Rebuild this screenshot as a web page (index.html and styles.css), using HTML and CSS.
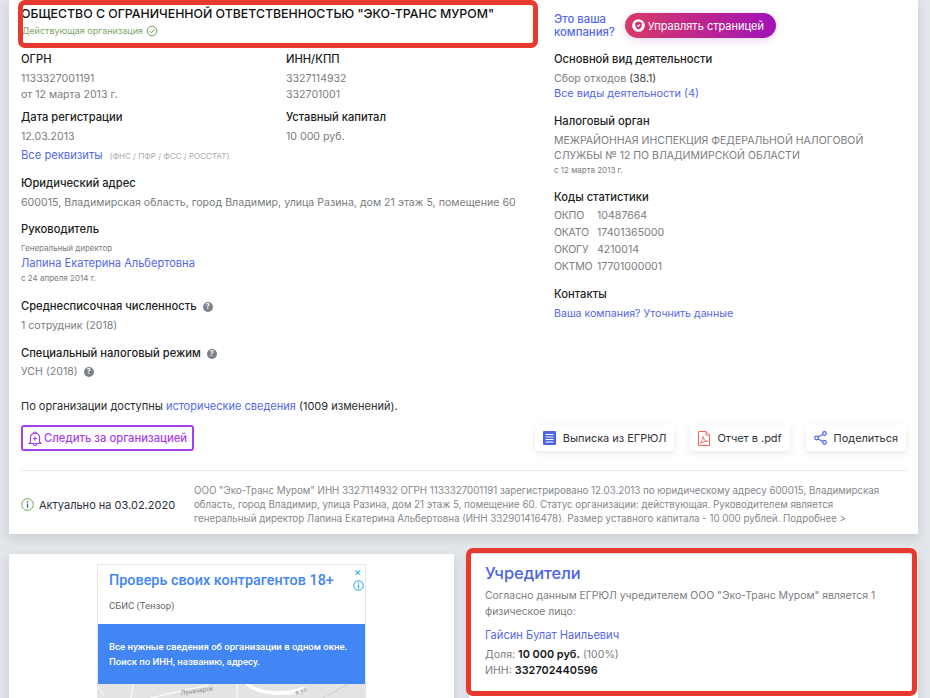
FILE: index.html
```html
<!DOCTYPE html>
<html lang="ru">
<head>
<meta charset="utf-8">
<title>ООО "Эко-Транс Муром"</title>
<link rel="stylesheet" href="styles.css">
</head>
<body>
<main class="page">
  <section class="card main-card">
    <div class="columns">
      <div class="left">
        <div class="head">
          <h1>ОБЩЕСТВО С ОГРАНИЧЕННОЙ ОТВЕТСТВЕННОСТЬЮ "ЭКО-ТРАНС МУРОМ"</h1>
          <div class="status">Действующая организация
            <svg width="12" height="12" viewBox="0 0 12 12" fill="none" stroke="#6aa84f"><circle cx="6" cy="6" r="4.8"/><path d="M3.8 6.1 5.4 7.7 8.3 4.6"/></svg>
          </div>
        </div>
        <div class="pair">
          <div class="cell"><h3>ОГРН</h3><p>1133327001191<br>от 12 марта 2013 г.</p></div>
          <div class="cell"><h3>ИНН/КПП</h3><p>3327114932<br>332701001</p></div>
        </div>
        <div class="pair second">
          <div class="cell"><h3>Дата регистрации</h3><p>12.03.2013</p></div>
          <div class="cell"><h3>Уставный капитал</h3><p>10 000 руб.</p></div>
        </div>
        <div class="req"><a href="#">Все реквизиты</a><span class="req-note">(ФНС / ПФР / ФСС / РОССТАТ)</span></div>
        <div class="block addr"><h3>Юридический адрес</h3><p>600015, Владимирская область, город Владимир, улица Разина, дом 21 этаж 5, помещение 60</p></div>
        <div class="block boss">
          <h3>Руководитель</h3>
          <div class="tiny">Генеральный директор</div>
          <a class="boss-name" href="#">Лапина Екатерина Альбертовна</a>
          <div class="tiny since">с 24 апреля 2014 г.</div>
        </div>
        <div class="block staff"><h3>Среднесписочная численность <span class="q">?</span></h3><p>1 сотрудник (2018)</p></div>
        <div class="block tax"><h3>Специальный налоговый режим <span class="q">?</span></h3><p>УСН (2018) <span class="q">?</span></p></div>
        <div class="history">По организации доступны <a href="#">исторические сведения</a> (1009 изменений).</div>
      </div>
      <div class="right">
        <div class="claim">
          <a class="claim-q" href="#">Это ваша<br>компания?</a>
          <a class="manage" href="#">
            <svg width="13" height="13" viewBox="0 0 14 14"><circle cx="7" cy="7" r="6.8" fill="#fff"/><path d="M7 2.800 10.500 4V7c0 2-1.500 3.300-3.500 4.200C5 10.300 3.500 9 3.500 7V4Z" fill="#cf2e72"/><path d="M5.400 6.800 6.700 8 8.700 5.800" fill="none" stroke="#fff" stroke-width="1.100"/></svg>
            Управлять страницей</a>
        </div>
        <div class="block activity"><h3>Основной вид деятельности</h3><p>Сбор отходов <span class="dark">(38.1)</span><br><a href="#">Все виды деятельности (4)</a></p></div>
        <div class="block organ"><h3>Налоговый орган</h3><p>МЕЖРАЙОННАЯ ИНСПЕКЦИЯ ФЕДЕРАЛЬНОЙ НАЛОГОВОЙ<br>СЛУЖБЫ № 12 ПО ВЛАДИМИРСКОЙ ОБЛАСТИ</p><div class="tiny">с 12 марта 2013 г.</div></div>
        <div class="block codes"><h3>Коды статистики</h3>
          <dl>
            <dt>ОКПО</dt><dd>10487664</dd>
            <dt>ОКАТО</dt><dd>17401365000</dd>
            <dt>ОКОГУ</dt><dd>4210014</dd>
            <dt>ОКТМО</dt><dd>17701000001</dd>
          </dl>
        </div>
        <div class="block contacts"><h3>Контакты</h3><p><a href="#">Ваша компания? Уточнить данные</a></p></div>
      </div>
    </div>
    <div class="actions">
      <a class="follow" href="#">
        <svg width="14" height="15" viewBox="0 0 14 15" fill="none" stroke="#a63ff0" stroke-width="1.200"><path d="M2.500 11V6.500C2.500 4 4.500 2.500 7 2.500S11.500 4 11.500 6.500V11L13 12.500H1Z"/><path d="M5.500 2.500C5.500 1.500 6.200 1 7 1S8.500 1.500 8.500 2.500M5.500 13c0 1 .8 1.500 1.500 1.500S8.500 14 8.500 13M7 5.500V9.500M5 7.500H9"/></svg>
        Следить за организацией</a>
      <div class="tools">
        <a class="tool" href="#"><svg width="13" height="14" viewBox="0 0 13 14"><rect width="13" height="14" rx="1" fill="#4a63e7"/><path d="M2.500 3.500H10.500M2.500 6H10.500M2.500 8.500H10.500M2.500 11H10.500" stroke="#fff" stroke-width="1.200"/></svg>Выписка из ЕГРЮЛ</a>
        <a class="tool" href="#"><svg width="12" height="15" viewBox="0 0 12 15" fill="none" stroke="#f2665f"><path d="M.5 .5H8L11.500 4V14.500H.5Z"/><path d="M8 .5V4H11.500"/><path d="M2 12.500C3.500 11.500 5 8 5 5.500 5.500 8.500 7.500 10.500 10 10.500 7.500 10 4 11 2 12.500Z" stroke-width=".9"/></svg>Отчет в .pdf</a>
        <a class="tool" href="#"><svg width="13" height="14" viewBox="0 0 13 14" fill="none" stroke="#4a63e7" stroke-width="1.200"><circle cx="2.500" cy="7" r="1.800"/><circle cx="10.500" cy="2.500" r="1.800"/><circle cx="10.500" cy="11.500" r="1.800"/><path d="M4 6 9 3.500M4 8 9 10.500"/></svg>Поделиться</a>
      </div>
    </div>
    <div class="actual">
      <div class="actual-date">
        <svg width="13" height="13" viewBox="0 0 13 13" fill="none"><circle cx="6.500" cy="6.500" r="5.800" stroke="#6aa84f"/><path d="M6.500 5.500V10M6.500 3V4.400" stroke="#3f6fb0" stroke-width="1.300"/></svg>
        Актуально на 03.02.2020</div>
      <p>ООО "Эко-Транс Муром" ИНН 3327114932 ОГРН 1133327001191 зарегистрировано 12.03.2013 по юридическому адресу 600015, Владимирская<br>область, город Владимир, улица Разина, дом 21 этаж 5, помещение 60. Статус организации: действующая. Руководителем является<br>генеральный директор Лапина Екатерина Альбертовна (ИНН 332901416478). Размер уставного капитала - 10 000 рублей. Подробнее &gt;</p>
    </div>
  </section>
  <div class="lower">
    <section class="card ad-card">
      <div class="ad">
        <div class="ad-top">
          <div class="ad-title">Проверь своих контрагентов 18+</div>
          <div class="ad-by">СБИС (Тензор)</div>
          <div class="ad-marks"><span class="ad-x">✕</span>
            <svg width="11" height="11" viewBox="0 0 11 11" fill="none" stroke="#1aa7d8"><circle cx="5.500" cy="5.500" r="4.800"/><path d="M5.500 4.500V8.500M5.500 2.300V3.500" stroke-width="1.200"/></svg>
          </div>
        </div>
        <div class="ad-blue">Все нужные сведения об организации в одном окне.<br>Поиск по ИНН, названию, адресу.</div>
        <div class="ad-map">
          <svg width="267" height="14" viewBox="0 0 267 14" fill="none" stroke="#fff">
            <path d="M0 3 6 11M35 0 33 14M52 14 110 1M139 0V14M150 2C160 10 185 14 208 7" stroke-width="1"/>
            <path d="M149 0C160 9 185 12 207 4" stroke-width="3"/>
            <path d="M225 14 250 0" stroke="#cfcfcf"/>
            <text x="83" y="11" transform="rotate(-8 83 11)" class="map-label">Луначарск</text>
            <text x="198" y="11" transform="rotate(-20 198 11)" class="map-label">я ул</text>
          </svg>
        </div>
      </div>
    </section>
    <section class="card founders">
      <h2>Учредители</h2>
      <p class="founders-text">Согласно данным ЕГРЮЛ учредителем ООО "Эко-Транс Муром" является 1 физическое лицо:</p>
      <a class="founder-name" href="#">Гайсин Булат Наильевич</a>
      <p class="founder-data">Доля: <b>10 000 руб.</b> (100%)<br>ИНН: <b>332702440596</b></p>
    </section>
  </div>
</main>
<div class="mark mark-top"></div>
<div class="mark mark-bottom"></div>
</body>
</html>
```
FILE: styles.css
```css
* { box-sizing: border-box; }
html, body { margin: 0; height: 698px; overflow: hidden; }
body { background: #e2e5e9; font-family: Inter, Roboto, "Liberation Sans", sans-serif; font-size: 10.6px; color: #7b7d80; position: relative; }
a { color: #5468e8; text-decoration: none; }
h1, h2, h3, p, dl, dd { margin: 0; }
.page { padding: 0 12px 0 9px; }
.card { background: #fff; box-shadow: 0 4px 10px rgba(60, 70, 90, .15); }
.main-card { height: 534px; padding: 0 12px; }
.columns { display: flex; height: 419px; }
.left { width: 533px; }
.right { flex: 1; padding-top: 13px; }
h1 { font-size: 12.33px; font-weight: 500; color: #111; line-height: 14px; padding-top: 7px; white-space: nowrap; }
.status { display: flex; align-items: center; gap: 3px; font-size: 9px; color: #7fa36a; line-height: 12px; margin-top: 4px; padding-left: 1px; }
h3 { font-size: 11.2px; font-weight: 500; color: #1c1e22; line-height: 14px; }
.pair { display: flex; margin-top: 15px; }
.pair.second { margin-top: 8px; }
.cell { width: 265px; }
.cell p { margin-top: 5px; line-height: 15.5px; }
.req { margin-top: 3px; line-height: 15px; }
.req a { font-size: 11.2px; }
.req-note { font-size: 8px; color: #a8abb0; margin-left: 7px; }
.block p { line-height: 15.5px; margin-top: 5px; }
.addr { margin-top: 12.5px; }
.addr p { font-size: 10.63px; white-space: nowrap; }
.boss { margin-top: 11.5px; }
.tiny { font-size: 8px; line-height: 11px; color: #7b7d80; }
.boss h3 + .tiny { margin-top: 6.5px; }
.boss-name { display: block; font-size: 11.1px; line-height: 17px; margin-top: 1px; }
.since { margin-top: 1px; }
.staff { margin-top: 15.5px; }
.tax { margin-top: 12.5px; }
.tax p { margin-top: 4px; }
.q { display: inline-flex; align-items: center; justify-content: center; width: 10px; height: 10px; border-radius: 50%; background: #7d8289; color: #fff; font-size: 7px; font-weight: 700; margin-left: 3px; vertical-align: 1px; }
.history { margin-top: 19px; font-size: 11px; color: #2a2c30; line-height: 15px; white-space: nowrap; }
.claim { display: flex; align-items: center; gap: 10px; height: 25px; }
.claim-q { font-weight: 500; font-size: 11.3px; line-height: 13px; white-space: nowrap; }
.manage { display: flex; align-items: center; gap: 3px; height: 25px; padding: 0 12px 0 7px; border-radius: 13px; color: #fff; font-size: 11px; white-space: nowrap; background: linear-gradient(90deg, #d93a66, #a112b8); box-shadow: 0 2px 8px rgba(170, 30, 180, .2); }
.activity { margin-top: 14px; }
.dark { color: #3a3c40; }
.activity p { line-height: 15px; }
.activity a { font-size: 10.9px; }
.organ { margin-top: 13px; }
.organ p { font-size: 10.5px; line-height: 15px; white-space: nowrap; }
.organ .tiny { margin-top: 1.5px; }
.codes { margin-top: 14.5px; }
.codes dl { display: grid; grid-template-columns: 43px 1fr; grid-auto-rows: 16.8px; margin-top: 4.3px; line-height: 16.8px; }
.codes dt { letter-spacing: -.3px; white-space: nowrap; }
.contacts { margin-top: 12px; }
.actions { display: flex; justify-content: space-between; align-items: center; height: 26px; margin-top: 6px; }
.follow { display: flex; align-items: center; gap: 2px; height: 26px; padding: 0 5px; border: 2px solid #a63ff0; border-radius: 3px; color: #a63ff0; font-weight: 500; font-size: 11.25px; white-space: nowrap; }
.tools { display: flex; gap: 16px; }
.tool { display: flex; align-items: center; gap: 7px; height: 26px; padding: 0 8px; background: #fff; border-radius: 3px; box-shadow: 0 2px 6px rgba(60, 70, 90, .12); color: #30333a; font-size: 10.95px; white-space: nowrap; }
.actual { display: flex; align-items: center; border-top: 1px solid #e8e9f0; margin-top: 19px; height: 64px; padding-top: 4px; }
.actual-date { display: flex; align-items: center; gap: 5px; width: 173px; flex: none; color: #2a3040; font-size: 11px; white-space: nowrap; }
.actual p { font-size: 9.74px; line-height: 14px; white-space: nowrap; color: #85878a; }
.lower { display: flex; gap: 15px; margin-top: 20px; }
.ad-card { width: 445px; height: 170px; padding-top: 10px; display: flex; justify-content: center; }
.ad { width: 269px; height: 160px; border: 1px solid #e6e6e6; position: relative; }
.ad-top { height: 59px; padding: 6px 11px; position: relative; }
.ad-title { font-family: Roboto, sans-serif; font-weight: 500; font-size: 14.4px; color: #4285f4; line-height: 20px; white-space: nowrap; }
.ad-by { font-family: Roboto, sans-serif; font-size: 9.5px; color: #666; margin-top: 9px; }
.ad-marks { position: absolute; top: 2px; right: 1px; width: 12px; display: flex; flex-direction: column; align-items: center; gap: 1px; }
.ad-x { color: #1aa7d8; font-size: 9px; line-height: 12px; }
.ad-blue { height: 60px; background: #4285f4; color: #fff; font-family: Roboto, sans-serif; font-weight: 500; font-size: 9.55px; line-height: 14.5px; padding: 16px 11px; white-space: nowrap; }
.ad-map { height: 41px; background: #e4e4e4; overflow: hidden; }
.ad-map svg { display: block; }
.map-label { font-family: Roboto, sans-serif; font-size: 6.5px; fill: #8a8a8a; stroke: none; }
.founders { flex: 1; height: 170px; padding: 10px 16px 0; }
.founders h2 { font-size: 16.4px; font-weight: 500; color: #4a63e7; line-height: 18px; }
.founders-text { margin-top: 6px; font-size: 10.4px; line-height: 15.5px; }
.founder-name { display: block; font-size: 11.1px; margin-top: 9px; line-height: 14px; }
.founder-data { margin-top: 5px; line-height: 15.5px; }
.founder-data b { color: #16181c; font-weight: 600; font-size: 10.9px; }
.mark { position: absolute; border: 5px solid #e8392f; border-radius: 7px; pointer-events: none; }
.mark-top { left: 18px; top: 0; width: 520px; height: 48px; }
.mark-bottom { left: 466px; top: 548px; width: 451px; height: 148px; }
```
